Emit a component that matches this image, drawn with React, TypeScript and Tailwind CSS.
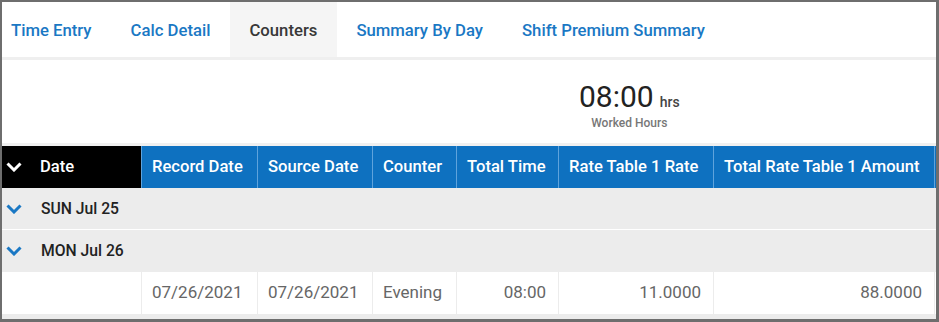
const tabs = ['Time Entry', 'Calc Detail', 'Counters', 'Summary By Day', 'Shift Premium Summary'];

const cols = [
  { label: 'Record Date', w: 'w-[116px]' },
  { label: 'Source Date', w: 'w-[115px]' },
  { label: 'Counter', w: 'w-[84px]' },
  { label: 'Total Time', w: 'w-[102px]' },
  { label: 'Rate Table 1 Rate', w: 'w-[155px]' },
  { label: 'Total Rate Table 1 Amount', w: 'w-[221px]' },
];

const row = [
  { v: '07/26/2021', right: false },
  { v: '07/26/2021', right: false },
  { v: 'Evening', right: false },
  { v: '08:00', right: true },
  { v: '11.0000', right: true },
  { v: '88.0000', right: true },
];

function Chevron({ className }: { className: string }) {
  return (
    <svg width="16" height="10" viewBox="0 0 16 10" className={className}>
      <polyline points="1.5,1.5 8,8 14.5,1.5" fill="none" stroke="currentColor" strokeWidth="3" strokeLinejoin="miter" />
    </svg>
  );
}

export default function App() {
  return (
    <div className="w-[939px] h-[322px] bg-white border-l-2 border-t-2 border-r-[3px] border-b-[3px] border-[#6e6e6e] flex flex-col font-['Roboto',sans-serif] overflow-hidden">
      {/* tabs */}
      <div className="h-[55px] flex shrink-0">
        {tabs.map((t, i) => (
          <div
            key={t}
            className={
              'h-full flex items-center pt-[3px] text-[16.7px] font-medium ' +
              (i === 0 ? 'pl-[9px] pr-[19.5px] ' : 'px-[19.5px] ') +
              (t === 'Counters' ? 'bg-[#f5f5f5] text-[#383838]' : 'text-[#1a78c4]')
            }
          >
            {t}
          </div>
        ))}
      </div>
      <div className="h-[3px] bg-[#efefef] shrink-0" />

      {/* summary */}
      <div className="h-[83px] shrink-0 flex">
        <div className="ml-[577px] pt-[19px] flex flex-col items-center">
          <div className="flex items-baseline">
            <span className="text-[30px] leading-[36px] text-[#222]">08:00</span>
            <span className="ml-[6px] text-[14px] font-medium text-[#444]">hrs</span>
          </div>
          <div className="-mt-[1px] text-[12px] font-medium text-[#777]">Worked Hours</div>
        </div>
      </div>
      <div className="h-[3px] bg-[#f0f0f0] shrink-0" />

      {/* header */}
      <div className="h-[42px] flex shrink-0 bg-[#0e71c0] text-white text-[16.6px] font-medium">
        <div className="w-[139px] bg-black flex items-center pl-[4px]">
          <Chevron className="text-white" />
          <span className="ml-[18px]">Date</span>
        </div>
        {cols.map((c) => (
          <div key={c.label} className={c.w + ' border-l border-[#5fa3dc] flex items-center pt-px pl-[10px] whitespace-nowrap'}>
            {c.label}
          </div>
        ))}
        <div className="flex-1 border-l border-[#5fa3dc]" />
      </div>

      {/* group rows */}
      <div className="h-[41px] bg-[#ececec] flex items-center pl-[4px] shrink-0">
        <Chevron className="text-[#1a78c4]" />
        <span className="ml-[19px] text-[15.7px] font-medium text-[#222]">SUN Jul 25</span>
      </div>
      <div className="h-px bg-white shrink-0" />
      <div className="h-[42px] bg-[#ececec] flex items-center pl-[4px] shrink-0">
        <Chevron className="text-[#1a78c4]" />
        <span className="ml-[19px] text-[15.7px] font-medium text-[#222]">MON Jul 26</span>
      </div>

      {/* data row */}
      <div className="h-[42px] flex shrink-0 text-[17px] text-[#666]">
        <div className="w-[139px]" />
        {row.map((c, i) => (
          <div
            key={i}
            className={
              cols[i].w +
              ' border-l border-[#ececec] flex items-center ' +
              (c.right ? 'justify-end pr-[12px]' : 'pl-[10px]')
            }
          >
            {c.v}
          </div>
        ))}
        <div className="flex-1 border-l border-[#ececec]" />
      </div>
      <div className="flex-1 bg-[#ececec]" />
    </div>
  );
}
